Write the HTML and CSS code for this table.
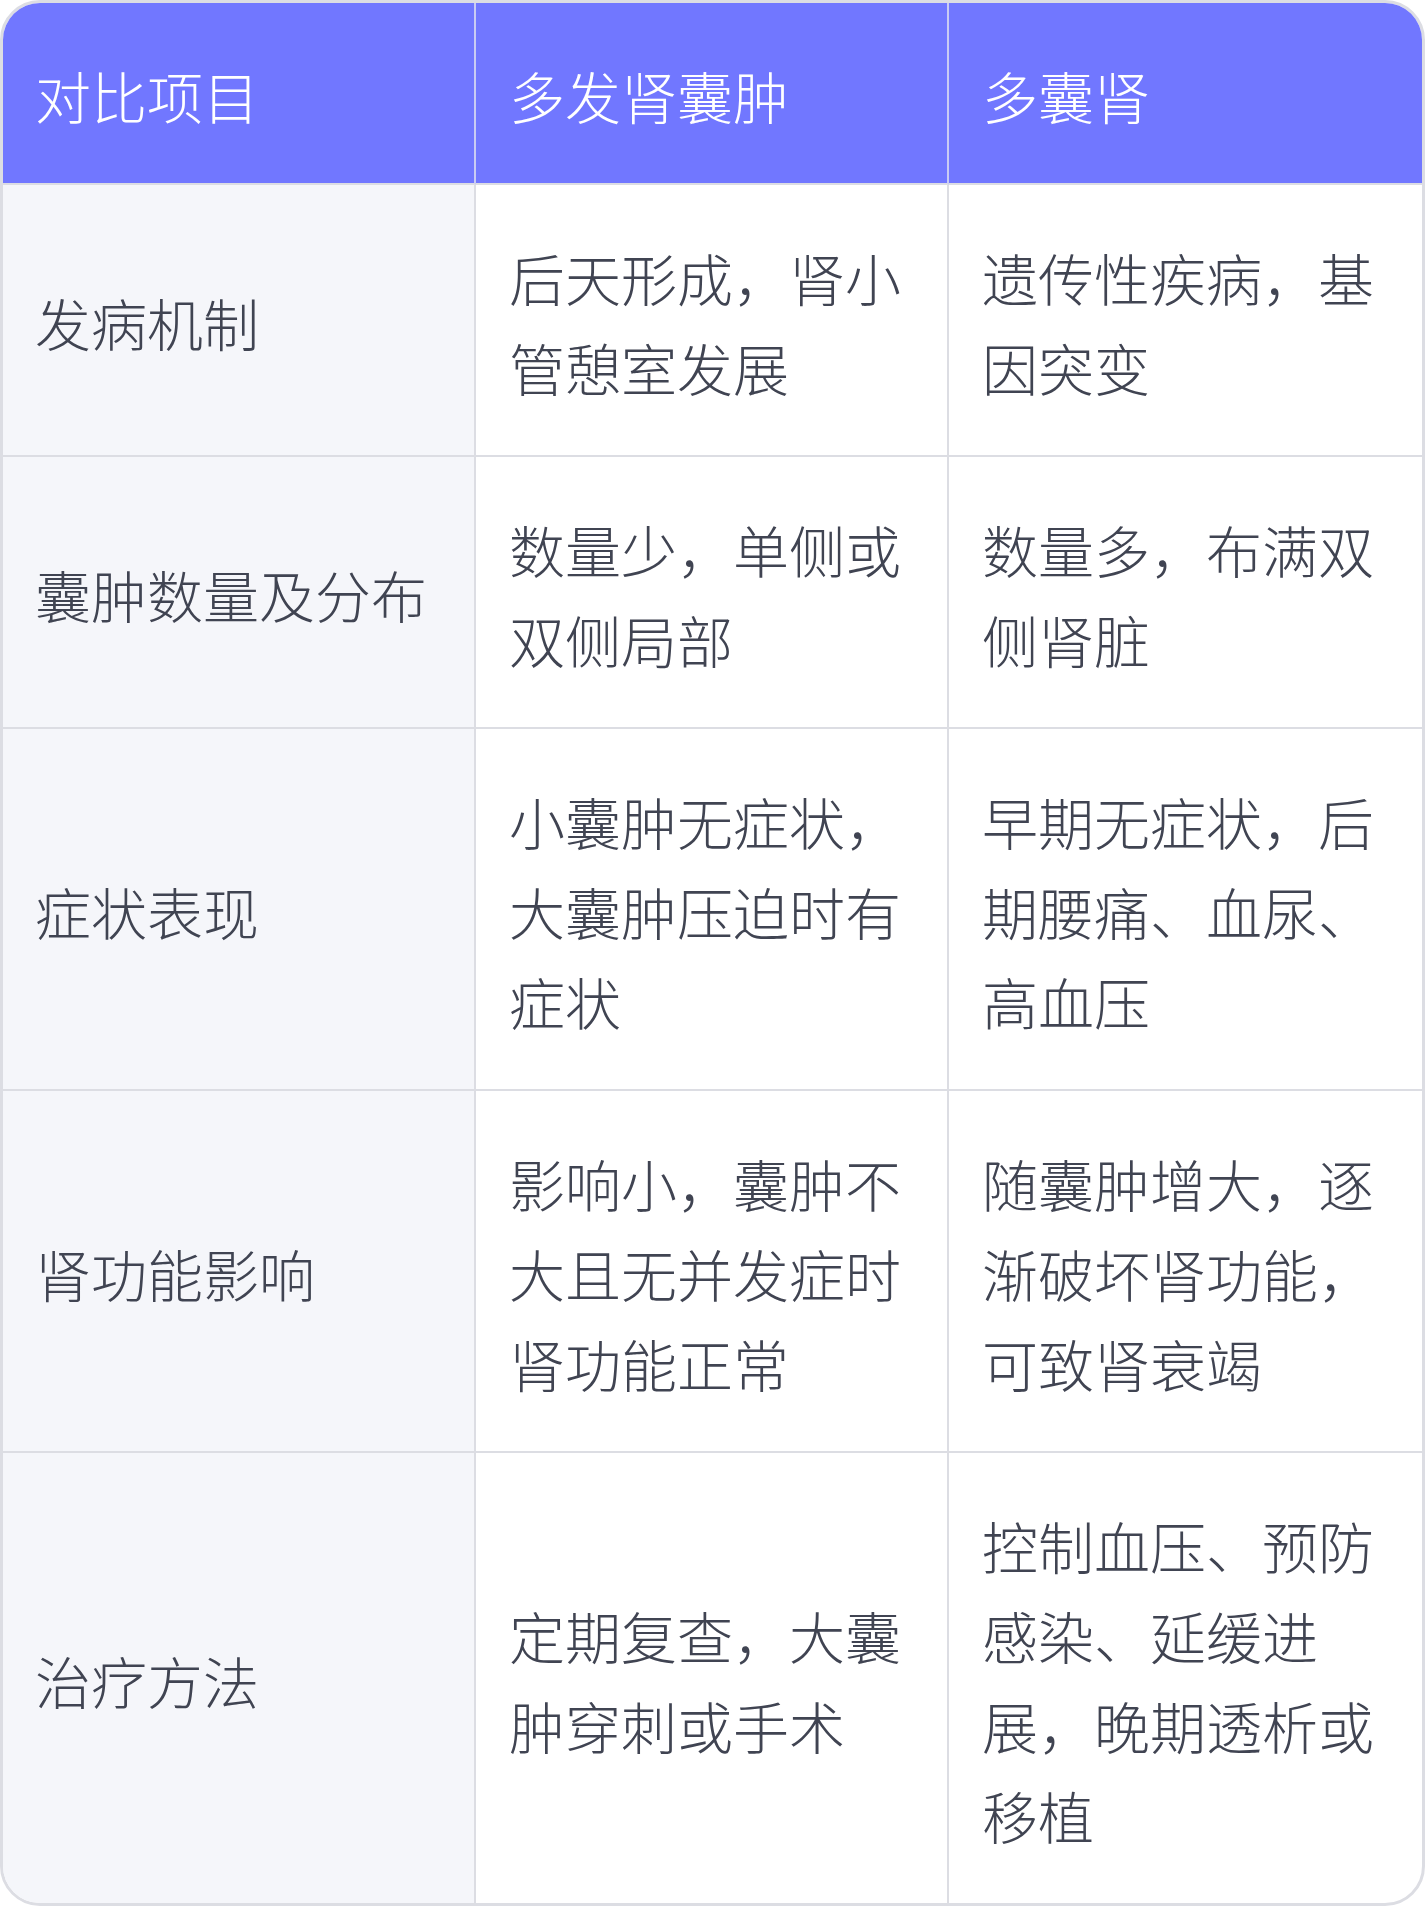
FILE: index.html
```html
<!DOCTYPE html>
<html lang="zh-CN">
<head>
<meta charset="utf-8">
<title>多发肾囊肿与多囊肾对比</title>
<link rel="stylesheet" href="styles.css">
</head>
<body>
<div class="card">
  <table class="cmp">
    <colgroup><col class="c"><col class="c"><col class="c"></colgroup>
    <thead>
      <tr>
        <th>对比项目</th>
        <th>多发肾囊肿</th>
        <th>多囊肾</th>
      </tr>
    </thead>
    <tbody>
      <tr>
        <td class="label">发病机制</td>
        <td>后天形成，肾小管憩室发展</td>
        <td>遗传性疾病，基因突变</td>
      </tr>
      <tr>
        <td class="label">囊肿数量及分布</td>
        <td>数量少，单侧或双侧局部</td>
        <td>数量多，布满双侧肾脏</td>
      </tr>
      <tr>
        <td class="label">症状表现</td>
        <td>小囊肿无症状，大囊肿压迫时有症状</td>
        <td>早期无症状，后期腰痛、血尿、高血压</td>
      </tr>
      <tr>
        <td class="label">肾功能影响</td>
        <td>影响小，囊肿不大且无并发症时肾功能正常</td>
        <td>随囊肿增大，逐渐破坏肾功能，可致肾衰竭</td>
      </tr>
      <tr>
        <td class="label">治疗方法</td>
        <td>定期复查，大囊肿穿刺或手术</td>
        <td>控制血压、预防感染、延缓进展，晚期透析或移植</td>
      </tr>
    </tbody>
  </table>
</div>
</body>
</html>
```

FILE: styles.css
```css
html, body {
  margin: 0;
  padding: 0;
  background: #ffffff;
}

.card {
  width: 1425px;
  box-sizing: border-box;
  border: 3px solid #dcdde3;
  border-radius: 40px;
  overflow: hidden;
  background: #ffffff;
}

.cmp {
  width: 100%;
  table-layout: fixed;
  border-collapse: separate;
  border-spacing: 0;
  font-family: "Noto Sans CJK SC", "Noto Sans", sans-serif;
  font-size: 56px;
  font-weight: 300;
  line-height: 90px;
  color: #404452;
}

.cmp th,
.cmp td {
  padding: 47px 32px 43px 33px;
  text-align: left;
  vertical-align: middle;
  border-right: 2px solid #dcdde3;
  border-bottom: 2px solid #dcdde3;
  word-break: break-all;
}

.cmp th:first-child,
.cmp td:first-child {
  padding-left: 32px;
}

.cmp th:last-child,
.cmp td:last-child {
  border-right: none;
}

.cmp tbody tr:last-child td {
  border-bottom: none;
}

.cmp th {
  background: #7177ff;
  color: #ffffff;
  font-weight: 300;
  border-right-color: #c9cbf3;
}

.cmp td.label {
  background: #f5f6fa;
}
```
